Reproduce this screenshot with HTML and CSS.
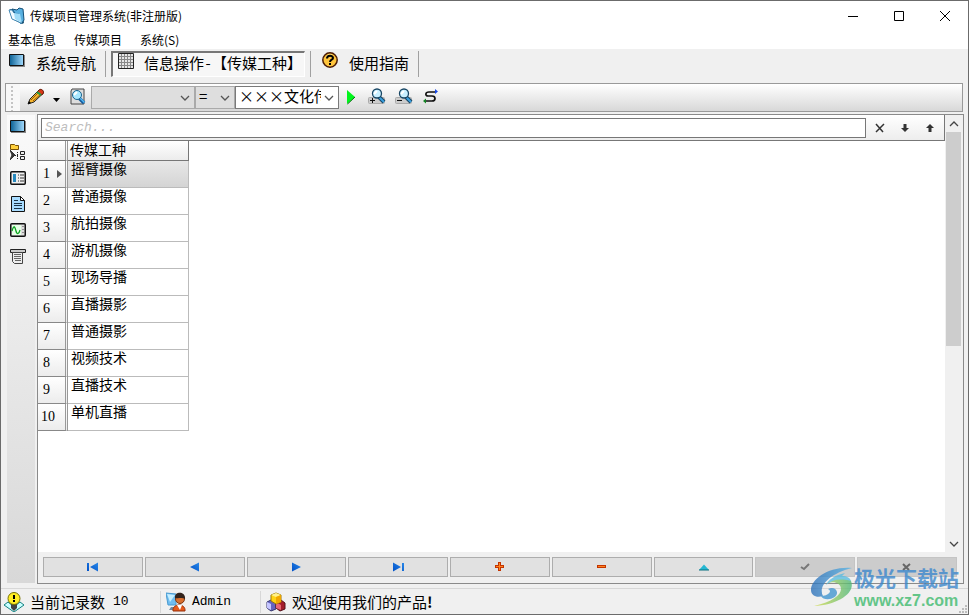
FILE: index.html
```html
<!DOCTYPE html>
<html lang="zh-CN">
<head>
<meta charset="utf-8">
<title>传媒项目管理系统(非注册版)</title>
<link rel="stylesheet" href="styles.css">
</head>
<body>
<svg class="defs" aria-hidden="true">
  <defs>
    <linearGradient id="blue" x1="0" x2="1"><stop offset="0" stop-color="#0a6094"/><stop offset="1" stop-color="#a4dcff"/></linearGradient>
    <linearGradient id="navblue" x1="0" x2="1" y1="1" y2="0"><stop offset="0" stop-color="#0050c8"/><stop offset="1" stop-color="#2888e8"/></linearGradient>
    <linearGradient id="wave" x1="0" x2="1"><stop offset="0" stop-color="#2b6fb8"/><stop offset="1" stop-color="#58b6e8"/></linearGradient>
    <linearGradient id="leaf" x1="0" x2="1"><stop offset="0" stop-color="#d4dc4c"/><stop offset="1" stop-color="#4fb878"/></linearGradient>
    <symbol id="screen" viewBox="0 0 16 14"><path fill="url(#blue)" stroke="#111" d="M.5 1.5h14v11H.5z"/><path stroke="#888" d="M15.5 2v12M1 13.5h15"/></symbol>
    <symbol id="lens" viewBox="0 0 18 18"><path d="M11 9l5 5" stroke="#174563" stroke-width="4"/><path d="M11 9l5 5" stroke="#38a0e0" stroke-width="2"/><circle cx="9" cy="5.500" r="4.500" fill="#c8efff" stroke="#174563" stroke-width="1.300"/><path d="M6 6l3-3" stroke="#fff" stroke-width="2"/></symbol>
    <symbol id="chev" viewBox="0 0 10 6"><path d="M1 1l4 4 4-4" fill="none" stroke="currentColor" stroke-width="1.300"/></symbol>
  </defs>
</svg>
<div class="window">
  <header class="title">
    <svg class="i18" viewBox="0 0 18 18"><path d="M1 3l2-1 11 4 2 10-2 1-10-5z" fill="#174e6e"/><path d="M4 2l5 1 2-2 4 1 1 11-2 3z" fill="#58b0e0" stroke="#155078"/><path d="M1 3l3 9 7 3 2 2-2-10-5-1-2-3z" fill="#f0faff" stroke="#2c7cae" stroke-width=".8"/><path d="M6 6l6 1 2 9-7-4z" fill="#9fdcf8"/></svg>
    <h1>传媒项目管理系统(非注册版)</h1>
    <div class="winbtns">
      <button aria-label="最小化"><svg viewBox="0 0 10 10"><path d="M0 5.500h10" stroke="#000"/></svg></button>
      <button aria-label="最大化"><svg viewBox="0 0 10 10"><path d="M.5.5h9v9h-9z" fill="none" stroke="#000"/></svg></button>
      <button aria-label="关闭"><svg viewBox="0 0 10 10"><path d="M0 0l10 10M10 0L0 10" stroke="#000"/></svg></button>
    </div>
  </header>
  <nav class="menu"><button>基本信息</button><button>传媒项目</button><button>系统(S)</button></nav>
  <nav class="tabs">
    <button class="tab"><svg class="tabicon" viewBox="0 0 16 14"><use href="#screen"/></svg>系统导航</button>
    <button class="tab pressed"><svg class="tabicon" viewBox="0 0 16 16"><path fill="#e6e6e6" stroke="#222" d="M.5.5h15v15H.5z"/><path stroke="#888" d="M3.500 1v14M6.500 1v14M9.500 1v14M12.500 1v14M1 3.500h14M1 6.500h14M1 9.500h14M1 12.500h14"/></svg><span>信息操作<span class="half">-</span>【传媒工种】</span></button>
    <button class="tab"><svg class="tabicon" viewBox="0 0 16 16"><circle cx="8" cy="8" r="7.200" fill="#ffc53c" stroke="#4b1c05" stroke-width="1.500"/><path d="M4 5a5 5 0 0 1 6-2" stroke="#fff1a0" fill="none"/><path d="M5 6.500c0-3.500 6-3.500 6-.5 0 2-3 1.500-3 4" fill="none" stroke="#000" stroke-width="2"/><path d="M7 11h2v2H7z"/></svg>使用指南</button>
  </nav>
  <div class="toolbar">
    <span class="grip"></span>
    <button class="tool pencil" aria-label="编辑"><svg viewBox="0 0 18 18"><path d="M1 16l2-5L12 2l4 3.500L7 14z" fill="#f7b52c" stroke="#222"/><path d="M4 12l8-8M6 13l8-7" stroke="#945708"/><path d="M12 2c2-2 6 1 4 4l-2 1-4-3z" fill="#d83816" stroke="#621404"/><path d="M10 4l4 3" stroke="#259f42" stroke-width="2"/><path d="M1 16l1-3 2 2z"/></svg></button>
    <button class="tool drop" aria-label="更多"><svg viewBox="0 0 7 4"><path d="M0 0h7L3.500 4z"/></svg></button>
    <button class="tool" aria-label="预览"><svg viewBox="0 0 18 18"><path d="M3 1h12v15H2V3z" fill="#ddd" stroke="#444"/><path d="M10 10l5 5" stroke="#165c9c" stroke-width="3.500"/><path d="M11 10l4.500 4.500" stroke="#52b8f6" stroke-width="1.500"/><circle cx="8" cy="7" r="4.500" fill="#a8e8ff" stroke="#17638f"/><path d="M5 7l3-3" stroke="#fff" stroke-width="2"/></svg></button>
    <div class="combo wide off"><select aria-label="字段"><option></option></select><svg><use href="#chev"/></svg></div>
    <div class="combo narrow off"><select aria-label="条件"><option>=</option></select><svg><use href="#chev"/></svg></div>
    <div class="combo wide"><select aria-label="值"><option>×××文化传播公司</option></select><svg><use href="#chev"/></svg></div>
    <button class="tool run" aria-label="执行"><svg viewBox="0 0 10 16"><path d="M1 1l8 7-8 7z" fill="#00f51c"/><path d="M1.500 15L9 8" stroke="#006c0b"/></svg></button>
    <button class="tool" aria-label="增加条件"><svg viewBox="0 0 18 18"><rect x=".5" y="9.500" width="16" height="6" rx="1" fill="#ccc" stroke="#aaa"/><use href="#lens"/><path d="M2 12.500h5M4.500 10v5" stroke="#111"/></svg></button>
    <button class="tool" aria-label="减少条件"><svg viewBox="0 0 18 18"><rect x=".5" y="9.500" width="16" height="6" rx="1" fill="#ccc" stroke="#aaa"/><use href="#lens"/><path d="M2 12.500h5" stroke="#111"/></svg></button>
    <button class="tool" aria-label="刷新"><svg viewBox="0 0 18 18"><path d="M14 4H7C3 4 3 8 6 8h4c4 0 4 5 0 5H3" fill="none" stroke="#111" stroke-width="1.700"/><path d="M13 1l3 2.500L13 6z" fill="#1848e8"/><path d="M4 10.500v5l-3-2.500z" fill="#138424"/></svg></button>
  </div>
  <main class="body">
    <aside class="side">
      <button aria-label="窗口"><svg viewBox="0 0 16 14"><use href="#screen"/></svg></button>
      <button aria-label="结构"><svg viewBox="0 0 16 16"><path d="M.5.5h4l1 1h3v4h-8z" fill="#ffd03c" stroke="#775006"/><path d="M0 6l5 5-5 5 2-5z" fill="#333" stroke="#333"/><path d="M5 11.500h4M7.500 8v7" stroke="#222" stroke-dasharray="1 1"/><path d="M10.500 7.500h4v3h-4zM10.500 12.500h4v3h-4z" fill="#eee" stroke="#222"/></svg></button>
      <button aria-label="表单"><svg viewBox="0 0 16 14"><rect x=".75" y=".75" width="14.500" height="12.500" rx="1" fill="#eee" stroke="#111" stroke-width="1.500"/><path d="M3 3h3v8H3z" fill="#2688bd"/><path d="M8 4h1M10 4h4M8 7h1M10 7h4M8 10h1M10 10h4" stroke="#333"/></svg></button>
      <button aria-label="文档"><svg viewBox="0 0 16 16"><path d="M1.500.5h9l4 4v11h-13z" fill="#a8dcff" stroke="#111"/><path d="M10.500.5v4h4z" fill="#fff" stroke="#111"/><path d="M4 4.500h4M4 7.500h8M4 9.500h8M4 12.500h8" stroke="#1c3448"/></svg></button>
      <button aria-label="监视"><svg viewBox="0 0 16 14"><rect x=".75" y=".75" width="14.500" height="12.500" rx="1" fill="#ddd" stroke="#111" stroke-width="1.500"/><path d="M2 2h9v10H2z" fill="#e6ffe6"/><path d="M2 8c2-7 3-4 4 0s3 3 4-1" fill="none" stroke="#08a31c" stroke-width="1.300"/><path d="M13 3v8" stroke="#444" stroke-dasharray="1 2"/></svg></button>
      <button aria-label="打印"><svg viewBox="0 0 16 16"><path d="M.5 1.500h15v3H.5z" fill="#ccc" stroke="#222"/><path d="M2.500 4.500h10v11h-8l-2-2z" fill="#eee" stroke="#444"/><path d="M4 6.500h7M4 8.500h7M4 10.500h7M5 12.500h6" stroke="#666"/></svg></button>
    </aside>
    <section class="panel">
      <div class="view">
        <div class="content">
          <div class="search">
            <input type="text" placeholder="Search..." aria-label="搜索">
            <button aria-label="清除"><svg viewBox="0 0 10 10"><path d="M1 1l7 8M9 1L1 9" stroke="#333" stroke-width="1.500"/></svg></button>
            <button aria-label="下一个"><svg viewBox="0 0 10 10"><path d="M3.500 1h3v4H9L5 9 1 5h2.500z" fill="#333"/></svg></button>
            <button aria-label="上一个"><svg viewBox="0 0 10 10"><path d="M3.500 9h3V5H9L5 1 1 5h2.500z" fill="#333"/></svg></button>
          </div>
          <table>
            <thead><tr><th class="num" aria-label="行号"></th><th class="job">传媒工种</th></tr></thead>
            <tbody>
              <tr class="current"><th class="num" scope="row">1<svg viewBox="0 0 5 8"><path d="M0 0l5 4-5 4z" fill="#555"/></svg></th><td>摇臂摄像</td></tr>
              <tr><th class="num" scope="row">2</th><td>普通摄像</td></tr>
              <tr><th class="num" scope="row">3</th><td>航拍摄像</td></tr>
              <tr><th class="num" scope="row">4</th><td>游机摄像</td></tr>
              <tr><th class="num" scope="row">5</th><td>现场导播</td></tr>
              <tr><th class="num" scope="row">6</th><td>直播摄影</td></tr>
              <tr><th class="num" scope="row">7</th><td>普通摄影</td></tr>
              <tr><th class="num" scope="row">8</th><td>视频技术</td></tr>
              <tr><th class="num" scope="row">9</th><td>直播技术</td></tr>
              <tr><th class="num ten" scope="row">10</th><td>单机直播</td></tr>
            </tbody>
          </table>
        </div>
        <div class="scroll">
          <button aria-label="向上滚动"><svg class="up"><use href="#chev"/></svg></button>
          <div class="track"><div class="thumb"></div></div>
          <button aria-label="向下滚动"><svg><use href="#chev"/></svg></button>
        </div>
      </div>
      <div class="pager">
        <button aria-label="首条"><svg viewBox="0 0 12 10"><path d="M0 1h2v8H0zM11 .5v9L3 5z" fill="url(#navblue)"/></svg></button>
        <button aria-label="上一条"><svg viewBox="0 0 12 10"><path d="M10 .5v9L1 5z" fill="url(#navblue)"/></svg></button>
        <button aria-label="下一条"><svg viewBox="0 0 12 10"><path d="M2 .5v9L11 5z" fill="url(#navblue)"/></svg></button>
        <button aria-label="末条"><svg viewBox="0 0 12 10"><path d="M10 1h2v8h-2zM1 .5v9L9 5z" fill="url(#navblue)"/></svg></button>
        <button aria-label="新增"><svg viewBox="0 0 12 10"><path d="M5.500 0v9M1 4.500h9" stroke="#c43400" stroke-width="3"/><path d="M5.500 1v7M2 4.500h7" stroke="#ff8420"/></svg></button>
        <button aria-label="删除"><svg viewBox="0 0 12 10"><path d="M1 4.500h9" stroke="#c43400" stroke-width="3"/><path d="M2 4.500h7" stroke="#ff8420"/></svg></button>
        <button aria-label="编辑记录"><svg viewBox="0 0 12 10"><path d="M1 8l5-5.500L11 8z" fill="#25b7d2"/><path d="M1 8h10" stroke="#087080"/></svg></button>
        <button aria-label="保存" disabled><svg viewBox="0 0 12 10"><path d="M2 5l3 2 5-5" fill="none" stroke="#777" stroke-width="2"/></svg></button>
        <button aria-label="取消" disabled><svg viewBox="0 0 12 10"><path d="M2 2l6 6M9 2L2 8" stroke="#666" stroke-width="2"/></svg></button>
      </div>
    </section>
  </main>
  <footer class="status">
    <div class="cell records"><svg viewBox="0 0 20 20"><path d="M0 13l4-3 6 5 6-5 4 3-10 7z" fill="#c8ffff" stroke="#168080"/><path d="M7 11h6v5l-3 3-3-3z" fill="#444"/><circle cx="10" cy="6.500" r="6" fill="#ffed24" stroke="#777100"/><path d="M9 3h2v4H9zM9 8h2v2H9z"/></svg>当前记录数<span class="mono count">10</span></div>
    <div class="cell user"><svg viewBox="0 0 20 20"><path d="M0 1l10 1v11H2z" fill="#70bdf0" stroke="#4a9bd0"/><path d="M1 2l8 1-5 7z" fill="#c7efff"/><path d="M5 15h7v3H3z" fill="#708ba5"/><path d="M7 19c-1-8 13-8 12 0z" fill="#e65b1c" stroke="#97300b"/><path d="M11 13h5l-2 5z" fill="#fff"/><circle cx="14" cy="7" r="4.500" fill="#d97030" stroke="#7d3510"/><path d="M9 6c-1-7 11-7 10 1-3-2-6 0-10-1z" fill="#32231c"/></svg><span class="mono">Admin</span></div>
    <div class="cell"><svg viewBox="0 0 20 20"><path d="M1 10l4-2 5 2v7l-5 2-4-3z" fill="#6464c0" stroke="#34346c"/><path d="M1 10l4 2v6l-4-2z" fill="#c6c6ff"/><path d="M10 10l5-2 4 3v6l-5 2-4-3z" fill="#a31c2a" stroke="#54101a"/><path d="M10 10l5 3v5l-5-2z" fill="#e66876"/><path d="M5 3l5-2 5 2v7l-5 2-5-3z" fill="#ffd414" stroke="#9b7909"/><path d="M5 3l5-2 5 2-5 2z" fill="#fff28c"/><path d="M10 5l5-2v7l-5 2z" fill="#f1a700"/></svg>欢迎使用我们的产品<b>!</b></div>
    <svg class="resize" viewBox="0 0 10 10"><path d="M7 1h2v2H7zM4 4h2v2H4zM7 4h2v2H7zM1 7h2v2H1zM4 7h2v2H4zM7 7h2v2H7z" fill="#bcbcbc"/></svg>
  </footer>
  <div class="mark">
    <svg viewBox="0 0 42 40"><path d="M41 1C18-1 0 12 0 23c0 6 6 8 12 6-5-9 5-22 29-28z" fill="url(#wave)"/><path d="M40 14c5 12-14 24-37 25 18-4 27-11 27-17 0-6-7-8-13-6 5-6 20-9 23-2z" fill="url(#leaf)"/><path d="M10 29c3 6 17 3 16-4-1-4-5-5-9-3 5 2 0 7-7 7z" fill="#3f94cf"/><path d="M34 6c-10 2-17 7-19 12 6-5 13-7 25-4-1-3-4-5-9-5z" fill="#59bce0"/></svg>
    <div><p class="site">极光下载站</p><p class="url">www.xz7.com</p></div>
  </div>
</div>
</body>
</html>
```
FILE: styles.css
```css
* { box-sizing: border-box; }
html, body { height: 100%; }
body {
  margin: 0;
  overflow: hidden;
  font: 15px/20px "Noto Sans CJK SC", sans-serif;
  color: #000;
}
button { margin: 0; padding: 0; border: 0; background: none; font: inherit; color: inherit; }
svg { display: block; flex: none; }
.defs { position: absolute; width: 0; height: 0; }

.window {
  position: relative;
  display: flex;
  flex-direction: column;
  height: 100vh;
  border: 1px solid #6b6b6b;
  background: #f0f0f0;
}
.title { display: flex; align-items: center; height: 30px; padding-left: 7px; background: #fff; }
.title h1 { flex: 1; margin: 0 0 0 4px; font-size: 12px; font-weight: 400; }
.i18 { width: 18px; height: 18px; }
.winbtns { display: flex; }
.winbtns button { display: grid; place-items: center; width: 46px; height: 28px; }
.winbtns svg { width: 10px; height: 10px; }

.menu { display: flex; gap: 18px; height: 18px; padding-left: 7px; background: #fff; font-size: 12px; line-height: 18px; }

.tabs { display: flex; align-items: flex-start; height: 34px; padding-top: 2px; }
.tab { display: flex; align-items: flex-start; height: 26px; padding: 1px 9px 0 8px; line-height: 22px; border-right: 1px solid #a0a0a0; }
.tab.pressed {
  margin: 0 5px;
  padding: 0 2px 0 5px;
  border: 1px solid #fff;
  border-top: 2px solid #777;
  border-left: 2px solid #777;
  background: #f7f7f7;
  line-height: 20px;
}
.tab.pressed + .tab { border-left: 1px solid #a0a0a0; padding-left: 11px; }
.tabicon { width: 16px; height: 16px; margin-right: 11px; }
.pressed .tabicon { margin-right: 10px; }
.half { display: inline-block; width: 8px; text-align: center; }

.toolbar {
  display: flex;
  align-items: center;
  height: 29px;
  margin: 0 5px 0 4px;
  border: 1px solid #999;
  background: linear-gradient(#fff, #d8d8d8);
}
.grip { align-self: stretch; width: 14px; margin-right: 4px; border-left: 5px solid #f8f8f8; border-right: 7px solid #f8f8f8; background: repeating-linear-gradient(#f8f8f8 0 2px, #c4c4c4 2px 4px); }
.tool { display: grid; place-items: center; width: 27px; height: 24px; padding-bottom: 1px; }
.tool svg { width: 18px; height: 18px; }
.pencil { width: 24px; }
.drop { width: 16px; padding-top: 5px; }
.drop svg { width: 7px; height: 4px; }
.run { width: 24px; }
.run svg { width: 10px; height: 16px; }
.combo { position: relative; height: 23px; }
.combo select {
  appearance: none;
  display: block;
  width: 100%;
  height: 100%;
  padding: 0 17px 3px 3px;
  border: 1px solid #7a7a7a;
  border-radius: 0;
  background: #fff;
  color: #000;
  opacity: 1;
  font: inherit;
  line-height: 18px;
}
.combo svg { position: absolute; right: 5px; top: 9px; width: 10px; height: 6px; color: #555; pointer-events: none; }
.combo.off select { border-color: #aaa; background: #dedede; }
.wide { width: 104px; }
.narrow { width: 40px; }

.body { display: flex; flex: 1; min-height: 0; margin: 2px 4px 4px 6px; }
.side { display: flex; flex-direction: column; align-items: center; gap: 10px; width: 28px; margin: 1px 2px 1px 0; padding: 3px 6px 0 0; background: linear-gradient(#fafafa, #d8d8d8); }
.side button { display: grid; place-items: center; width: 16px; height: 16px; }
.side svg { width: 16px; height: 16px; }
.panel { display: flex; flex: 1; flex-direction: column; min-width: 0; border: 1px solid #8a8a8a; }
.view { display: flex; flex: 1; min-height: 0; background: #fff; }
.content { flex: 1; min-width: 0; }

.search { display: flex; align-items: center; height: 26px; padding: 0 2px 0 3px; border-right: 1px solid #777; border-bottom: 1px solid #777; background: linear-gradient(#fff, #ededed); }
.search input { flex: 1; min-width: 0; height: 20px; margin-right: 1px; padding: 0 3px; border: 1px solid #777; border-radius: 0; background: #fff; font: italic 13px/18px "Liberation Mono", monospace; }
.search input::placeholder { color: #bdbdbd; opacity: 1; }
.search button { display: grid; place-items: center; width: 25px; height: 20px; }
.search svg { width: 10px; height: 10px; }

table { table-layout: fixed; width: 151px; border-collapse: separate; border-spacing: 0; font-size: 14px; }
th, td { padding: 0; font-weight: 400; text-align: left; vertical-align: top; }
thead th { height: 20px; border-bottom: 1px solid #777; background: linear-gradient(#fff, #ececec); line-height: 16px; }
th.num { width: 30px; padding-left: 5px; border-right: 3px double #999; background: linear-gradient(#fff, #ececec); }
th.job { padding-left: 2px; border-right: 1px solid #777; }
tbody th, tbody td { height: 27px; }
tbody th { border-bottom: 1px solid #888; font-family: "Liberation Serif", serif; line-height: 26px; }
tbody th.ten { padding-left: 3px; }
tbody th svg { display: inline-block; width: 5px; height: 8px; margin-left: 7px; }
tbody td { padding-left: 3px; border-right: 1px solid #bbb; border-bottom: 1px solid #bbb; line-height: 14px; }
.current td { background: linear-gradient(#e8e8e8, #d4d4d4); }

.scroll { display: flex; flex-direction: column; width: 18px; padding: 0 2px 0 1px; background: #f0f0f0; }
.scroll button { display: grid; place-items: center; height: 17px; color: #444; }
.scroll svg { width: 10px; height: 6px; }
.scroll .up { transform: rotate(180deg); }
.track { flex: 1; }
.thumb { height: 53%; background: #cdcdcd; }

.pager { display: grid; grid-template-columns: repeat(9, 1fr); gap: 2px; padding: 5px 6px 6px 5px; }
.pager button { display: grid; place-items: center; height: 20px; border: 1px solid #adadad; background: #e1e1e1; }
.pager button:disabled { border-color: #c4c4c4; background: #ccc; }
.pager svg { width: 12px; height: 10px; }

.status { display: flex; align-items: center; height: 26px; border-top: 1px solid #d7d7d7; }
.cell { display: flex; align-items: center; padding-left: 5px; }
.cell svg { width: 20px; height: 20px; margin-right: 6px; }
.records { width: 160px; padding-left: 3px; border-right: 1px solid #d7d7d7; }
.user { width: 100px; border-right: 1px solid #d7d7d7; }
.mono { font-family: "Liberation Mono", monospace; font-size: 13px; line-height: 22px; }
.count { margin-left: 8px; }
.resize { align-self: flex-end; width: 10px; height: 10px; margin-left: auto; }

.mark { position: absolute; right: 9px; bottom: 3px; display: flex; align-items: center; opacity: .78; pointer-events: none; }
.mark svg { width: 42px; height: 40px; margin-right: 1px; }
.mark p { margin: 0; }
.site { font-size: 21px; font-weight: 700; line-height: 28px; color: #3a86cc; }
.url { font: 700 16px/20px "Liberation Sans", sans-serif; color: #3cba6c; }
```
